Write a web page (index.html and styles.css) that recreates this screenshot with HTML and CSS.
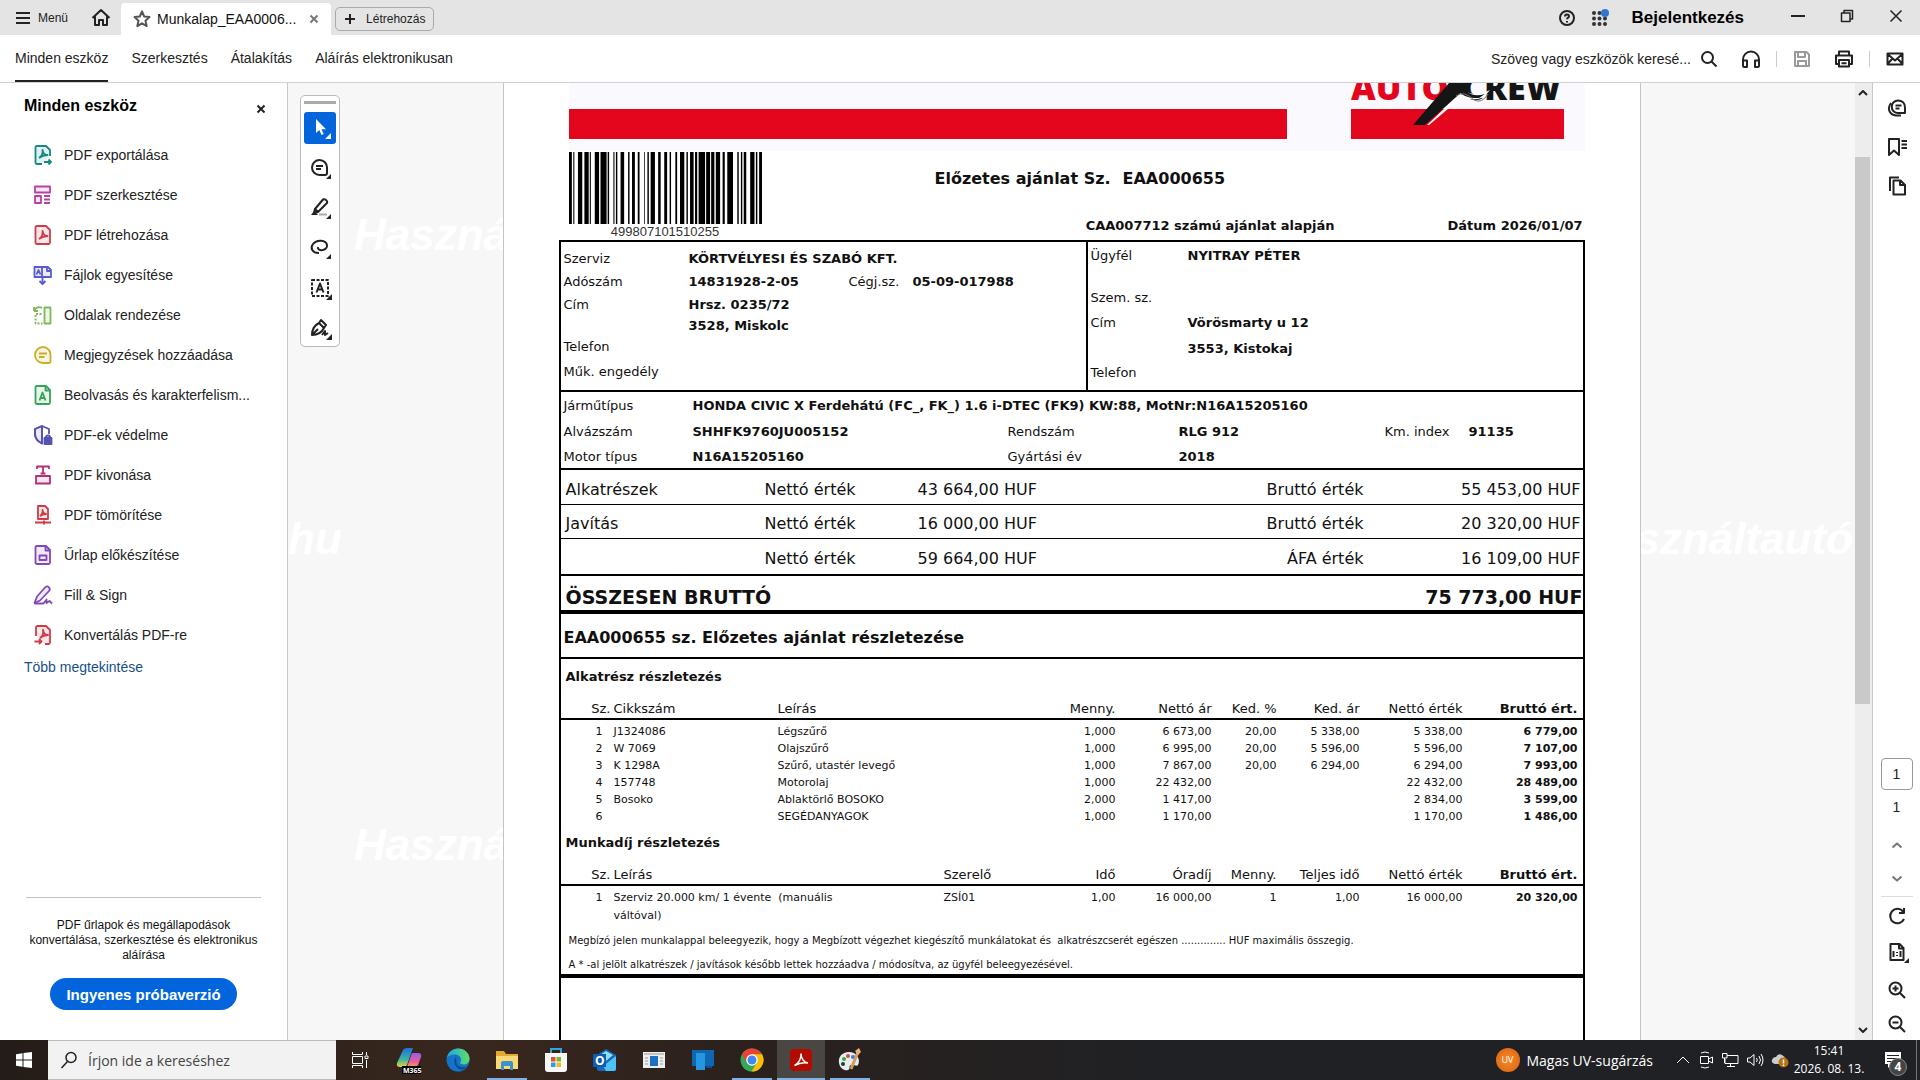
FILE: index.html
```html
<!DOCTYPE html>
<html lang="hu">
<head>
<meta charset="utf-8">
<title>Munkalap_EAA000655</title>
<link rel="stylesheet" href="styles.css">
</head>
<body>
<div class="screen">
  <header class="titlebar">
    <button class="menu-btn"><svg class="ic" width="16" height="14" viewBox="0 0 16 14"><path d="M1 2h14M1 7h14M1 12h14"/></svg>Menü</button>
    <button class="home-btn" aria-label="Kezdőlap"><svg class="ic" width="20" height="20" viewBox="0 0 20 20"><path d="M1.5 10 10 2l8.500 8M4 8.500V17h4v-5h4v5h4V8.500"/></svg></button>
    <div class="tab">
      <svg class="ic star" width="18" height="18" viewBox="0 0 18 18"><path d="m9 1.500 2.200 5 5.300.6-4 3.600 1.200 5.400L9 13.300l-4.700 2.800 1.200-5.400-4-3.600 5.300-.6z"/></svg>
      <span class="tab-name">Munkalap_EAA0006...</span>
      <button class="tab-close" aria-label="Lap bezárása"><svg class="ic grey" width="10" height="10" viewBox="0 0 10 10"><path d="m1.500 1.500 7 7m0-7-7 7"/></svg></button>
    </div>
    <button class="create-btn"><svg class="ic" width="12" height="12" viewBox="0 0 12 12"><path d="M6 1v10M1 6h10"/></svg>Létrehozás</button>
    <div class="title-right">
      <button aria-label="Súgó"><svg class="ic" width="18" height="18" viewBox="0 0 18 18"><circle cx="9" cy="9" r="7"/><path d="M7 7.500c0-2.700 4-2.700 4-.3 0 1.400-2 1.600-2 3M9 12v1.500"/></svg></button>
      <button aria-label="Alkalmazások"><svg width="18" height="18" viewBox="0 0 18 18" fill="#333"><circle cx="3" cy="4" r="2"/><circle cx="8.500" cy="4" r="2"/><circle cx="3" cy="9.500" r="2"/><circle cx="8.500" cy="9.500" r="2"/><circle cx="14" cy="9.500" r="2"/><circle cx="3" cy="15" r="2"/><circle cx="8.500" cy="15" r="2"/><circle cx="14" cy="15" r="2"/><circle cx="14" cy="4" r="4" fill="#2f77d0"/></svg></button>
      <button class="signin">Bejelentkezés</button>
      <div class="win-controls">
        <button aria-label="Kis méret"><svg class="ic" width="16" height="16" viewBox="0 0 16 16"><path d="M1 8h14"/></svg></button>
        <button aria-label="Előző méret"><svg class="ic thin" width="14" height="14" viewBox="0 0 14 14"><path d="M1.500 4h8.500v8.500H1.500zM4 4V1.500h8.500V10H10"/></svg></button>
        <button aria-label="Bezárás"><svg class="ic thin" width="14" height="14" viewBox="0 0 14 14"><path d="m1.500 1.500 11 11m0-11-11 11"/></svg></button>
      </div>
    </div>
  </header>

  <nav class="toolbar">
    <a class="current" href="#">Minden eszköz</a>
    <a href="#">Szerkesztés</a>
    <a href="#">Átalakítás</a>
    <a href="#">Aláírás elektronikusan</a>
    <div class="toolbar-right">
      <input class="find" aria-label="Keresés" placeholder="Szöveg vagy eszközök keresé...">
      <button aria-label="Keresés indítása"><svg class="ic" width="18" height="18" viewBox="0 0 18 18"><circle cx="7.500" cy="7.500" r="5.500"/><path d="m11.500 11.500 5 5"/></svg></button>
      <button class="wide" aria-label="Felolvasás"><svg class="ic" width="20" height="18" viewBox="0 0 20 18"><path d="M2 12V9.500a8 8 0 0 1 16 0V12M2 10.500h4V17H3.500A1.500 1.500 0 0 1 2 15.500zM18 10.500h-4V17h2.500a1.500 1.500 0 0 0 1.500-1.500z"/></svg></button>
      <span class="sep"></span>
      <button aria-label="Mentés"><svg class="ic pale" width="18" height="18" viewBox="0 0 18 18"><path d="M2 2h11.500L16 4.500V16H2zM5 2v5h7V2M5 16v-5h8v5"/></svg></button>
      <button class="wide" aria-label="Nyomtatás"><svg class="ic" width="20" height="18" viewBox="0 0 20 18"><path d="M5 4.500V1.500h10v3M5 14H2V5.500h16V14h-3M5 10h10v6.500H5zM7.500 13.200h5"/></svg></button>
      <span class="sep"></span>
      <button class="wide" aria-label="E-mail"><svg class="ic" width="18" height="14" viewBox="0 0 18 14"><path d="M1.500 1.500h15v11h-15zM1.500 2 9 8.500 16.500 2M1.500 12l5-5.500M16.500 12l-5-5.500"/></svg></button>
    </div>
  </nav>

  <main class="work">
    <aside class="side">
      <div class="side-head"><h2>Minden eszköz</h2><button aria-label="Panel bezárása"><svg class="ic" width="10" height="10" viewBox="0 0 10 10"><path d="m1.500 1.500 7 7m0-7-7 7"/></svg></button></div>
      <ul class="tools">
        <li><button><svg class="tic c-teal" viewBox="0 0 20 20"><path class="f" d="M4 1h9l4 4v6M9 19H4q-1.500 0-1.500-1.500v-15Q2.500 1 4 1h9l4 4v6"/><path d="M6 13c3-2 4-5 3.500-8 1 4 2 5 5 5-4 0-6 1-8.500 3M11 17h7m-2.500-2.500L18 17l-2.500 2.500"/></svg>PDF exportálása</button></li>
        <li><button><svg class="tic c-pink" viewBox="0 0 20 20"><path class="f" d="M2 1.500h15v6H2zM2 11h6v7H2z"/><path d="M11 11h6M11 14.500h6M11 18h6"/></svg>PDF szerkesztése</button></li>
        <li><button><svg class="tic c-red" viewBox="0 0 20 20"><path class="f" d="M4 1h9l4 4v12.500q0 1.500-1.500 1.500H4q-1.500 0-1.500-1.500v-15Q2.500 1 4 1z"/><path d="M6 14c3-2 4-5 3.500-8 1 4 2 5 5 5-4 0-6 1-8.500 3"/></svg>PDF létrehozása</button></li>
        <li><button><svg class="tic c-blue" viewBox="0 0 20 20"><path class="f" d="M1.500 2H9v10H1.500zM9 2h6l3 3v7H9z"/><path d="M14 2v4h4M3.500 9.500 5.500 5l2 4.500M9.500 12v7m-3-3 3 3 3-3"/></svg>Fájlok egyesítése</button></li>
        <li><button><svg class="tic c-green" viewBox="0 0 20 20"><path class="f" d="M11.500 2.500h6v16h-6z"/><path d="M1 6V2m0 4h4M1.500 5.500C3 2 6 1.500 9 3"/><path stroke-dasharray="2 1.500" d="M8.500 9h-6v9.500h7"/></svg>Oldalak rendezése</button></li>
        <li><button><svg class="tic c-yellow" viewBox="0 0 20 20"><path class="f" d="M10 2c4.500 0 7.500 3.500 7.500 8v6q0 2-2 2H10a8 8 0 0 1 0-16z"/><path d="M6 8.500h8M6 12h5.500"/></svg>Megjegyzések hozzáadása</button></li>
        <li><button><svg class="tic c-emerald" viewBox="0 0 20 20"><path class="f" d="M4 1h9l4 4v12.500q0 1.500-1.500 1.500H4q-1.500 0-1.500-1.500v-15Q2.500 1 4 1z"/><path d="M12.500 1v4.500H17M6.500 15.500l3-8 3 8M7.500 13h4"/></svg>Beolvasás és karakterfelism...</button></li>
        <li><button><svg class="tic c-indigo" viewBox="0 0 20 20"><path class="f" d="M9 18.500C4 16 2 13 2 9V4l7-3z"/><path d="M9 1v17.500C4 16 2 13 2 9V4l7-3 7 3v5"/><path class="s" d="M11.500 13h7v6h-7z"/><path d="M13 13v-1.500q2-2 4 0V13"/></svg>PDF-ek védelme</button></li>
        <li><button><svg class="tic c-magenta" viewBox="0 0 20 20"><path class="f" d="M3 11h14v7.500H3z"/><path d="M4 4V1.500h12V4M10 1.500v7M7.500 8.500h5"/></svg>PDF kivonása</button></li>
        <li><button><svg class="tic c-red" viewBox="0 0 20 20"><path class="f" d="M5 1h7l3 3v10H5z"/><path d="M7 11c2-1 3-4 2.500-6 .5 3 1.500 4 3.500 4-3 0-4 .5-6 2M2 17.500h16M11 15.500v4"/></svg>PDF tömörítése</button></li>
        <li><button><svg class="tic c-purple" viewBox="0 0 20 20"><path class="f" d="M4 1h9l4 4v12.500q0 1.500-1.500 1.500H4q-1.500 0-1.500-1.500v-15Q2.500 1 4 1z"/><path d="M12.500 1v4.500H17M6.500 10.500h7V15h-7z"/></svg>Űrlap előkészítése</button></li>
        <li><button><svg class="tic c-purple" viewBox="0 0 20 20"><path class="f" d="M1.500 18 4 11.500 12.500 2q2-1.500 3.500.5t0 3.500L7 15.500z"/><path d="M1.500 18.500h9l3-4v3.500l3-2 2.500 2.500"/></svg>Fill &amp; Sign</button></li>
        <li><button><svg class="tic c-red" viewBox="0 0 20 20"><path class="f" d="M3 11V2.500Q3 1 4.500 1H13l4 4v12.500q0 1.500-1.500 1.500H12"/><path d="M7 13c3-2 3.500-5 3-8 1 4 2 5 5 5-4 0-6 1-8 3M1.500 16.500h7M6 14l2.500 2.500L6 19"/></svg>Konvertálás PDF-re</button></li>
      </ul>
      <a class="more" href="#">Több megtekintése</a>
      <div class="promo">
        <p>PDF űrlapok és megállapodások konvertálása, szerkesztése és elektronikus aláírása</p>
        <button>Ingyenes próbaverzió</button>
      </div>
    </aside>

    <section class="viewer">
      <div class="marks" aria-hidden="true">
        <span class="mark m1">Haszná</span>
        <span class="mark m2">hu</span>
        <span class="mark m3">sználtautó</span>
        <span class="mark m4">Haszná</span>
      </div>
      <div class="quick">
        <span class="grip"></span>
        <button class="on" aria-label="Kijelölés"><svg width="24" height="24" viewBox="0 0 24 24"><path fill="#fff" d="M8 3v14l3.300-3 2.200 5 2.200-1-2.200-4.800H18zM23 17v6h-6z"/></svg></button>
        <button aria-label="Megjegyzés"><svg class="ic" width="24" height="24" viewBox="0 0 24 24"><path d="M11.500 4c4.500 0 7.500 3.500 7.500 7.500V17q0 2-2 2h-5.500a7.500 7.500 0 0 1 0-15zM8 10h7M8 13h5"/><path class="corner" d="M23 18v5h-5z"/></svg></button>
        <button aria-label="Kiemelés"><svg class="ic" width="24" height="24" viewBox="0 0 24 24"><path d="m7 13 8-9.500q2-1 3.500 1T18 8l-8 8zM7 13l-1 4 4-1"/><path class="corner" d="M3 19h7l-4-4zM23 18v5h-5z"/><path stroke="#aaa" d="M11 18.500h8"/></svg></button>
        <button aria-label="Rajzolás"><svg class="ic" width="24" height="24" viewBox="0 0 24 24"><path d="M5 8c4-5 13-4 14 1 1 6-10 7-9 2M5 8c-3 4-1 9 6 9"/><path class="corner" d="M23 18v5h-5z"/></svg></button>
        <button aria-label="Szöveg"><svg class="ic" width="24" height="24" viewBox="0 0 24 24"><path stroke-dasharray="3 1.500" d="M4 4h16v16H4z"/><path d="m8.500 16.500 3.500-9 3.500 9M10 13.500h4"/><path class="corner" d="M24 18v6h-6z"/></svg></button>
        <button aria-label="Aláírás"><svg class="ic" width="24" height="24" viewBox="0 0 24 24"><path d="M4 19c0-5 1-9 7-12l5 5c-2 4-5 7-12 7zm0 0 6-6M11 7l2-3 5 5-2 3M14 19l3-4v4l3-2"/><path class="corner" d="M24 18v6h-6z"/></svg></button>
      </div>

      <article class="page">
        <div class="band">
          <span class="band-bar"></span>
          <svg class="logo" viewBox="0 0 214 68" width="214" height="68">
            <rect y="26" width="213" height="30" fill="#e4061c"/>
            <text x="0" y="17" fill="#e4061c">AUTO</text>
            <text x="111" y="17" fill="#151515">CREW</text>
            <path d="M76 42 113 7q10 8 26 0l-6 7q-12 5-22 0L78 42z" fill="#fff"/>
            <path d="M62 42 98 0h16v6L74 42z" fill="#151515"/>
            <path d="M112 0q4 16 22 11l-6 4q-14 1-21-7z" fill="#151515"/>
            <path d="M105 13q8-6 18 4 8 4 14-6" fill="none" stroke="#777"/>
          </svg>
        </div>
        <header class="doc-head">
          <figure class="barcode">
            <svg width="193" height="72" viewBox="76 0 539 72" preserveAspectRatio="none"><path d="M76 0h8v72h-8zM88 0h3v72h-3zM101 0h12v72h-12zM119 0h12v72h-12zM134 0h3v72h-3zM148 0h12v72h-12zM164 0h17v72h-17zM184 0h4v72h-4zM200 0h3v72h-3zM207 0h4v72h-4zM220 0h10v72h-10zM241 0h4v72h-4zM252 0h8v72h-8zM268 0h5v72h-5zM286 0h2v72h-2zM295 0h4v72h-4zM304 0h12v72h-12zM325 0h7v72h-7zM342 0h8v72h-8zM357 0h4v72h-4zM373 0h5v72h-5zM386 0h12v72h-12zM404 0h4v72h-4zM414 0h10v72h-10zM428 0h6v72h-6zM438 0h18v72h-18zM459 0h11v72h-11zM473 0h9v72h-9zM486 0h12v72h-12zM505 0h6v72h-6zM518 0h16v72h-16zM546 0h4v72h-4zM556 0h4v72h-4zM564 0h7v72h-7zM582 0h12v72h-12zM598 0h4v72h-4zM607 0h8v72h-8z"/></svg>
            <figcaption>499807101510255</figcaption>
          </figure>
          <div class="doc-titles">
            <h1><span>Előzetes ajánlat Sz.</span><span>EAA000655</span></h1>
            <p><span>CAA007712 számú ajánlat alapján</span><span>Dátum 2026/01/07</span></p>
          </div>
        </header>

        <div class="form">
          <section class="parties">
            <div class="party service">
              <span>Szerviz</span><b class="span3">KÖRTVÉLYESI ÉS SZABÓ KFT.</b>
              <span>Adószám</span><b>14831928-2-05</b><span>Cégj.sz.</span><b>05-09-017988</b>
              <span>Cím</span><b class="span3">Hrsz. 0235/72</b>
              <b class="val span3">3528, Miskolc</b>
              <span class="whole">Telefon</span>
              <span class="whole">Műk. engedély</span>
            </div>
            <div class="party client">
              <span>Ügyfél</span><b>NYITRAY PÉTER</b>
              <span class="whole"></span>
              <span class="whole">Szem. sz.</span>
              <span>Cím</span><b>Vörösmarty u 12</b>
              <b class="val">3553, Kistokaj</b>
              <span class="whole">Telefon</span>
            </div>
          </section>
          <section class="vehicle">
            <span>Járműtípus</span><b class="span5">HONDA CIVIC X Ferdehátú (FC_, FK_) 1.6 i-DTEC (FK9) KW:88, MotNr:N16A15205160</b>
            <span>Alvázszám</span><b>SHHFK9760JU005152</b><span>Rendszám</span><b>RLG 912</b><span>Km. index</span><b>91135</b>
            <span>Motor típus</span><b>N16A15205160</b><span>Gyártási év</span><b>2018</b>
          </section>
          <table class="sums">
            <colgroup><col class="s1"><col class="s2"><col class="s3"><col><col class="s5"></colgroup>
            <tr><th>Alkatrészek</th><td>Nettó érték</td><td>43 664,00 HUF</td><td class="r">Bruttó érték</td><td class="r">55 453,00 HUF</td></tr>
            <tr><th>Javítás</th><td>Nettó érték</td><td>16 000,00 HUF</td><td class="r">Bruttó érték</td><td class="r">20 320,00 HUF</td></tr>
            <tr><th></th><td>Nettó érték</td><td>59 664,00 HUF</td><td class="r">ÁFA érték</td><td class="r">16 109,00 HUF</td></tr>
          </table>
          <div class="total"><span>ÖSSZESEN BRUTTÓ</span><span>75 773,00 HUF</span></div>
          <h2 class="detail-title">EAA000655 sz. Előzetes ajánlat részletezése</h2>
          <h3>Alkatrész részletezés</h3>
          <table class="items">
            <colgroup><col class="c-no"><col class="c-code"><col><col class="c-qty"><col class="c-net"><col class="c-pct"><col class="c-disc"><col class="c-val"><col class="c-gross"></colgroup>
            <thead><tr><th>Sz.</th><th class="l">Cikkszám</th><th class="l">Leírás</th><th>Menny.</th><th>Nettó ár</th><th>Ked. %</th><th>Ked. ár</th><th>Nettó érték</th><th>Bruttó ért.</th></tr></thead>
            <tbody>
            <tr><td>1</td><td class="l">J1324086</td><td class="l">Légszűrő</td><td>1,000</td><td>6 673,00</td><td>20,00</td><td>5 338,00</td><td>5 338,00</td><td>6 779,00</td></tr>
            <tr><td>2</td><td class="l">W 7069</td><td class="l">Olajszűrő</td><td>1,000</td><td>6 995,00</td><td>20,00</td><td>5 596,00</td><td>5 596,00</td><td>7 107,00</td></tr>
            <tr><td>3</td><td class="l">K 1298A</td><td class="l">Szűrő, utastér levegő</td><td>1,000</td><td>7 867,00</td><td>20,00</td><td>6 294,00</td><td>6 294,00</td><td>7 993,00</td></tr>
            <tr><td>4</td><td class="l">157748</td><td class="l">Motorolaj</td><td>1,000</td><td>22 432,00</td><td></td><td></td><td>22 432,00</td><td>28 489,00</td></tr>
            <tr><td>5</td><td class="l">Bosoko</td><td class="l">Ablaktörlő BOSOKO</td><td>2,000</td><td>1 417,00</td><td></td><td></td><td>2 834,00</td><td>3 599,00</td></tr>
            <tr><td>6</td><td class="l"></td><td class="l">SEGÉDANYAGOK</td><td>1,000</td><td>1 170,00</td><td></td><td></td><td>1 170,00</td><td>1 486,00</td></tr>
            </tbody>
          </table>
          <h3>Munkadíj részletezés</h3>
          <table class="items labour">
            <colgroup><col class="c-no"><col><col class="c-mech"><col class="c-time"><col class="c-net"><col class="c-pct"><col class="c-disc"><col class="c-val"><col class="c-gross"></colgroup>
            <thead><tr><th>Sz.</th><th class="l">Leírás</th><th class="l">Szerelő</th><th>Idő</th><th>Óradíj</th><th>Menny.</th><th>Teljes idő</th><th>Nettó érték</th><th>Bruttó ért.</th></tr></thead>
            <tbody><tr><td>1</td><td class="l">Szerviz 20.000 km/ 1 évente&nbsp; (manuális<br>váltóval)</td><td class="l">ZSÍ01</td><td>1,00</td><td>16 000,00</td><td>1</td><td>1,00</td><td>16 000,00</td><td>20 320,00</td></tr></tbody>
          </table>
          <div class="notes">
            <p>Megbízó jelen munkalappal beleegyezik, hogy a Megbízott végezhet kiegészítő munkálatokat és&nbsp; alkatrészcserét egészen .............. HUF maximális összegig.</p>
            <p>A * -al jelölt alkatrészek / javítások később lettek hozzáadva / módosítva, az ügyfél beleegyezésével.</p>
          </div>
        </div>
      </article>
    </section>

    <div class="scroll">
      <svg class="ic" width="10" height="8" viewBox="0 0 10 8"><path d="m1 6 4-4 4 4"/></svg>
      <div class="track"><div class="thumb"></div></div>
      <svg class="ic" width="10" height="8" viewBox="0 0 10 8"><path d="m1 2 4 4 4-4"/></svg>
    </div>

    <aside class="rail">
      <div class="rail-top">
        <button aria-label="Megjegyzések"><svg class="ic" width="20" height="20" viewBox="0 0 20 20"><path d="M11 2.500c4 0 7 2.500 7 7V15h-7a6.200 6.200 0 0 1 0-12.500zM8.500 7.500h6M8.500 10.500h4"/><path d="M4 5c-4 5-2 12 5 12.500h5"/></svg></button>
        <button aria-label="Könyvjelzők"><svg class="ic" width="20" height="20" viewBox="0 0 20 20"><path d="M2 2h10v16l-5-4.500L2 18zM14.500 4H20M14.500 7.500H20M14.500 11H20"/></svg></button>
        <button aria-label="Oldalak"><svg class="ic" width="20" height="20" viewBox="0 0 20 20"><path d="M6.500 4.500h7L18 9v9.500H6.500zM13 4.500V9h5M3 15V1.500h9"/></svg></button>
      </div>
      <div class="rail-bottom">
        <input class="page-no" aria-label="Oldalszám" value="1">
        <span class="page-count">1</span>
        <button class="step" aria-label="Előző oldal"><svg class="ic grey" width="12" height="8" viewBox="0 0 12 8"><path d="m1.500 6.500 4.500-4 4.500 4"/></svg></button>
        <button class="step" aria-label="Következő oldal"><svg class="ic grey" width="12" height="8" viewBox="0 0 12 8"><path d="m1.500 1.500 4.500 4 4.500-4"/></svg></button>
        <span class="line"></span>
        <button aria-label="Forgatás"><svg class="ic" width="20" height="20" viewBox="0 0 20 20"><path d="M16 5.500A7.200 7.200 0 1 0 17 13M17 2v5h-5"/></svg></button>
        <button aria-label="Igazítás"><svg class="ic" width="28" height="24" viewBox="0 0 28 24"><path d="M7.500 3h9l4 4v12h-13zM16 3v4.500h4.500M10.500 10v6M17.500 10v6M14 11v1M14 14v1"/><path class="corner" d="M26 17v5h-5z"/></svg></button>
        <button aria-label="Nagyítás"><svg class="ic" width="20" height="20" viewBox="0 0 20 20"><circle cx="8.500" cy="8.500" r="6"/><path d="m13 13 5 5M5.500 8.500h6M8.500 5.500v6"/></svg></button>
        <button class="last" aria-label="Kicsinyítés"><svg class="ic" width="20" height="20" viewBox="0 0 20 20"><circle cx="8.500" cy="8.500" r="6"/><path d="m13 13 5 5M5.500 8.500h6"/></svg></button>
      </div>
    </aside>
  </main>

  <footer class="taskbar">
    <button class="start" aria-label="Start"><svg width="16" height="16" viewBox="0 0 16 16" fill="#fff"><path d="M0 2.200 6.500 1.300v6.200H0zM7.500 1.100 16 0v7.500H7.500zM0 8.500h6.500v6.200L0 13.800zM7.500 8.500H16V16l-8.500-1.100z"/></svg></button>
    <label class="win-search"><svg class="ic thin" width="18" height="18" viewBox="0 0 18 18"><circle cx="11" cy="6.500" r="5"/><path d="m7.500 10.500-6 6.500"/></svg><input placeholder="Írjon ide a kereséshez" aria-label="Keresés a gépen"></label>
    <div class="apps">
      <button aria-label="Feladatnézet"><svg width="18" height="18" viewBox="0 0 18 18" fill="none" stroke="#fff"><path d="M1.500 1v2.500h10V1M1.500 17v-2.500h10V17M1.500 5.500h10v7h-10zM15.500 1v3M15.500 9v8M14 5h3v2.500h-3z"/></svg></button>
      <button aria-label="Microsoft 365"><svg width="26" height="28" viewBox="0 0 26 28"><defs><linearGradient id="mA" x1="0" y1="0" x2="0" y2="1"><stop offset="0" stop-color="#1f6fe0"/><stop offset=".6" stop-color="#3cb4a0"/><stop offset="1" stop-color="#e8d23a"/></linearGradient><linearGradient id="mB" x1="0" y1="0" x2="0" y2="1"><stop offset="0" stop-color="#9a5be8"/><stop offset=".6" stop-color="#e85ca0"/><stop offset="1" stop-color="#f59a60"/></linearGradient></defs><path fill="url(#mA)" d="M7 4q1-2 4-2h6l-6 17q-1 2-4 2H4q-4 0-3-4z"/><path fill="url(#mB)" d="M16 7h6q4 0 3 4l-3 8q-1 2-4 2h-7z"/><path fill="#000" d="M6 20h19v8H6z"/><text x="7" y="27" font-size="7" font-weight="700" fill="#fff">M365</text></svg></button>
      <button aria-label="Edge"><svg width="24" height="24" viewBox="0 0 24 24"><defs><linearGradient id="eg" x1="0" y1="0" x2="1" y2="0"><stop offset="0" stop-color="#1fa5e8"/><stop offset="1" stop-color="#62dd62"/></linearGradient></defs><circle cx="12" cy="12" r="11.500" fill="#1273c8"/><path fill="url(#eg)" d="M1 10C2 4 7 .500 12 .500c7 0 11.500 5 11.500 10 0 4-3 6-6 6-2 0-3.500-1-3.500-2 1-1 1-2 1-3 0-3-3-5-6.500-5S2 8 1 10z"/><path fill="#0d4a94" d="M10 9c-3 3-2 9 3 12 3 1 7 0 8.500-3-3 2-10 2-11-3-.5-2 0-4-.5-6z"/></svg></button>
      <button class="open" aria-label="Fájlkezelő"><svg width="24" height="22" viewBox="0 0 24 22"><path fill="#e6a92e" d="M1 2h8l2 3h12v14H1z"/><path fill="#fbd873" d="M1 7h22v13H1z"/><path fill="#3a93cf" d="M6 21v-7q0-2 2-2h8q2 0 2 2v7h-3v-4H9v4z"/></svg></button>
      <button aria-label="Store"><svg width="24" height="26" viewBox="0 0 24 26"><path fill="none" stroke="#36a3dc" stroke-width="2" d="M7 8V2h10v6"/><path fill="#f7f7f7" d="M1 6h22v16q0 3-3 3H4q-3 0-3-3z"/><path fill="#e8502f" d="M7 10h4.500v4.500H7z"/><path fill="#7ab82d" d="M12.500 10H17v4.500h-4.500z"/><path fill="#2b9fe0" d="M7 15.500h4.500V20H7z"/><path fill="#f6b820" d="M12.500 15.500H17V20h-4.500z"/></svg></button>
      <button aria-label="Outlook"><svg width="26" height="24" viewBox="0 0 26 24"><path fill="#1766b8" d="m5 7 9-6 10 6v14q0 2-2 2H7q-2 0-2-2z"/><path fill="#4cc2f5" d="m24 8-13 10 3 5h8q2 0 2-2z"/><path fill="#8be0fb" d="m8 7 6-4 7 4-7 6z"/><path fill="#0d5cb0" d="M1 6h13v13H1z"/><text x="3" y="17" font-size="12" font-weight="700" fill="#fff">O</text></svg></button>
      <button aria-label="Hírek"><svg width="22" height="18" viewBox="0 0 22 18"><path fill="#eee" d="M0 1h22v16H0z"/><path fill="#1c72c2" d="M7 5h8v10H7z"/><path stroke="#999" d="M1 3h20M2 7h3M2 10h3M2 13h3M17 7h3M17 10h3M17 13h3"/></svg></button>
      <button aria-label="Telefonkapcsolat"><svg width="24" height="22" viewBox="0 0 24 22"><path fill="#0f67b3" d="M1 1h22v16H1z"/><path fill="#2497e0" d="M5 4h9v17H5z"/><path fill="#0b4e92" d="M15 17h6v2h-6z"/></svg></button>
      <button class="open" aria-label="Chrome"><svg width="24" height="24" viewBox="0 0 24 24"><circle cx="12" cy="12" r="11.500" fill="#34a853"/><path fill="#ea4335" d="M2 6.200A11.500 11.500 0 0 1 22 6.300H12L7 15z"/><path fill="#fbbc05" d="M22 6.300A11.500 11.500 0 0 1 11.500 23.500L17 14.500 12 6.300z"/><circle cx="12" cy="12" r="5.800" fill="#fff"/><circle cx="12" cy="12" r="4.500" fill="#4285f4"/></svg></button>
      <button class="open active" aria-label="Acrobat"><svg width="24" height="24" viewBox="0 0 24 24"><rect x="1" y="1" width="22" height="22" rx="4" fill="#b30b00"/><path fill="none" stroke="#fff" stroke-width="1.500" d="M5.500 17.500c4-2 7-7 6.500-12 0 5 3 9 7 9.500-5-1-9 0-13.500 2.500z"/></svg></button>
      <button class="open" aria-label="Paint"><svg width="26" height="26" viewBox="0 0 26 26"><path fill="#e4edf0" d="M12 5C5 5 1 10 2 16s6 8 9 7 0-4 3-5 5 2 7 0c3-5-1-13-9-13z"/><circle cx="7" cy="12" r="2" fill="#3da33d"/><circle cx="11" cy="9" r="2" fill="#e8442e"/><circle cx="6" cy="17" r="2" fill="#333"/><circle cx="16" cy="10" r="2" fill="#2e7ee8"/><path stroke="#d99a55" stroke-width="3" d="m14 22 7-17"/><path fill="#e8b07a" d="m18 4 4-3 2 4-3 3z"/></svg></button>
    </div>
    <div class="tray">
      <button class="weather"><span class="uv">UV</span>Magas UV-sugárzás</button>
      <div class="tray-icons">
        <svg class="tr" width="16" height="16" viewBox="0 0 16 16"><path d="m2 11 6-6 6 6"/></svg>
        <svg class="tr" width="16" height="18" viewBox="0 0 16 18"><path d="M2.500 5.500h8v7h-8zM10.500 8l4-2v6l-4-2M3 2q4-2 8 0M3 16q4 2 8 0"/></svg>
        <svg class="tr" width="18" height="16" viewBox="0 0 18 16"><path d="M6 3.500h11v8H4V7M9.500 11.500v3M6 14.500h8M1.500 1.500H6V6H1.500zM3.500 6v5"/></svg>
        <svg class="tr" width="18" height="16" viewBox="0 0 18 16"><path d="M1.500 6H4l4-3.500v11L4 10H1.500zM10.500 6q1.500 2 0 4M13 4q3 4 0 8M15 2q4 6 0 12"/></svg>
        <svg width="18" height="16" viewBox="0 0 18 16"><path fill="#ccc" d="M4 12q-4-1-3-4t4-3q2-4 6-2t3 5l2 4z"/><circle cx="12.500" cy="10.500" r="5" fill="#b9700f"/><path stroke="#fff" stroke-width="1.500" d="M12.500 7.500v4M12.500 12.500V14"/></svg>
      </div>
      <div class="clock"><span>15:41</span><span>2026. 08. 13.</span></div>
      <button class="notice" aria-label="Értesítések"><svg width="18" height="18" viewBox="0 0 18 18"><path fill="#fff" d="M1 1h16v12H8l-4 4v-4H1z"/><path stroke="#222" d="M3 4.500h12M3 7.500h12M3 10.500h7"/></svg><span class="badge">4</span></button>
    </div>
  </footer>
</div>
</body>
</html>
```
FILE: styles.css
```css
* { box-sizing: border-box; }
body { margin: 0; font-family: "Liberation Sans", Arial, sans-serif; font-size: 14px; color: #222; }
button { font: inherit; color: inherit; background: none; border: 0; padding: 0; display: flex; align-items: center; justify-content: center; }
input { font: inherit; color: inherit; border: 0; background: none; padding: 0; min-width: 0; }
input::placeholder { color: inherit; opacity: 1; }
a { color: inherit; text-decoration: none; }
h1, h2, h3, p, ul, figure { margin: 0; padding: 0; font-weight: inherit; font-size: inherit; }
ul { list-style: none; }
svg { flex: none; display: block; }

.ic { fill: none; stroke: #222; stroke-width: 2; stroke-linejoin: round; }
.ic.thin { stroke-width: 1.5; }
.ic.grey { stroke: #777; }
.ic.star { stroke: #555; }
.ic.pale { stroke: #999; }
.corner { fill: #222; stroke: none; }

.screen { height: 100vh; display: flex; flex-direction: column; overflow: hidden; background: #fff; }

/* window title bar */
.titlebar { height: 35px; flex: none; display: flex; align-items: center; background: #e4e4e4; font-size: 12px; }
.menu-btn { gap: 7px; margin-left: 15px; }
.home-btn { margin: 0 10px 0 23px; }
.tab { align-self: flex-end; height: 32px; width: 210px; display: flex; align-items: center; padding: 0 12px; background: #fff; border-radius: 4px 4px 0 0; font-size: 14px; color: #111; }
.tab-name { flex: 1; padding-left: 6px; white-space: nowrap; }
.create-btn { height: 24px; margin: 3px 0 0 4px; padding: 0 8px; gap: 10px; border: 1px solid #aaa; border-radius: 5px; }
.title-right { margin-left: auto; display: flex; align-items: center; gap: 15px; }
.signin { font-size: 17px; font-weight: 700; color: #000; padding-left: 8px; }
.win-controls { display: flex; padding: 0 0 3px 14px; }
.win-controls button { width: 49px; }

/* tool tabs */
.toolbar { height: 48px; flex: none; display: flex; align-items: stretch; gap: 23px; padding-left: 15px; border-bottom: 1px solid #d0d0d0; }
.toolbar a { display: flex; align-items: center; border-bottom: 2px solid transparent; }
.toolbar a.current { border-color: #222; }
.toolbar-right { margin-left: auto; display: flex; align-items: center; padding-right: 9px; }
.toolbar-right button { width: 34px; }
.toolbar-right button.wide { width: 50px; }
.toolbar-right button.wide:last-child { width: 32px; margin-left: 9px; }
.find { width: 201px; height: 24px; }
.sep { width: 1px; height: 16px; background: #ccc; margin-right: 8px; }
.sep:nth-last-child(2) { margin: 0; }

.work { flex: 1; min-height: 0; display: flex; }

/* left panel */
.side { width: 288px; flex: none; display: flex; flex-direction: column; border-right: 1px solid #c8c8c8; }
.side-head { height: 52px; display: flex; align-items: center; justify-content: space-between; padding: 0 21px 6px 24px; }
.side-head h2 { font-size: 16px; font-weight: 700; color: #000; }
.side-head button { padding-top: 6px; }
.tools button { height: 40px; padding-left: 33px; gap: 11px; }
.tic { width: 20px; height: 20px; fill: none; stroke: currentColor; stroke-width: 1.800; stroke-linejoin: round; }
.tic .f { fill: currentColor; fill-opacity: .12; }
.tic .s { fill: currentColor; }
.tic.c-teal { color: #138a83; } .tic.c-pink { color: #b8419c; } .tic.c-red { color: #cf3b46; }
.tic.c-blue { color: #5b5bd0; } .tic.c-green { color: #7fb75a; } .tic.c-yellow { color: #c9ae28; }
.tic.c-emerald { color: #36a356; } .tic.c-indigo { color: #5653b2; } .tic.c-magenta { color: #b52f74; }
.tic.c-purple { color: #8048b8; }
.more { margin: 4px 24px; color: #184f86; }
.promo { margin: auto 26px 30px; padding-top: 20px; border-top: 1px solid #c4c4c4; display: flex; flex-direction: column; align-items: center; gap: 15px; }
.promo p { font-size: 12px; line-height: 15px; text-align: center; color: #111; }
.promo button { height: 32px; padding: 0 16px; border-radius: 16px; background: #0265dc; color: #fff; font-weight: 700; font-size: 15px; white-space: nowrap; }

/* document area */
.viewer { flex: 1; min-width: 0; position: relative; overflow: hidden; background: #f7f7f7; }
.marks { position: absolute; inset: 0; overflow: hidden; color: #fff; font: italic 700 44px/60px "Liberation Sans", Arial, sans-serif; }
.mark { position: absolute; }
.m1 { left: 66px; top: 122px; }
.m2 { left: 0; top: 426px; }
.m3 { right: 2px; top: 426px; }
.m4 { left: 66px; top: 732px; }
.quick { position: absolute; left: 12px; top: 12px; width: 40px; height: 252px; padding: 5px 3px 0; display: flex; flex-direction: column; gap: 8px; background: #fff; border: 1px solid #bbb; border-radius: 5px; }
.quick button { height: 32px; border-radius: 3px; }
.quick .on { background: #0265dc; }
.grip { height: 3px; background: #aaa; }

.page { position: relative; width: min(1138px, 100%); min-height: 100%; margin: 0 auto; padding: 0 55px; display: flex; flex-direction: column; background: #fff; border: solid #c4c4c4; border-width: 0 1px; color: #111; font-family: "DejaVu Sans", Verdana, sans-serif; font-size: 13px; }
.band { height: 68px; margin: 0 0 0 10px; padding-right: 20px; display: flex; justify-content: space-between; background: #f9f9fe; }
.band-bar { width: 718px; height: 30px; margin-top: 26px; background: #e4061c; }
.logo { font: 800 34px "Open Sans", sans-serif; }
.doc-head { height: 89px; display: flex; padding: 1px 0 0 10px; }
.barcode { width: 193px; text-align: center; }
.barcode figcaption { font: 13px/15px "Liberation Sans", sans-serif; color: #333; }
.doc-titles { flex: 1; display: flex; flex-direction: column; justify-content: space-between; padding: 17px 2px 5px 173px; font-weight: 700; }
.doc-titles h1 { font-size: 16px; line-height: 20px; display: flex; gap: 12px; }
.doc-titles p { display: flex; justify-content: flex-end; gap: 113px; white-space: nowrap; line-height: 18px; }

.form { flex: 1; border: 2px solid #000; border-bottom: 0; }
.parties { display: flex; height: 150px; border-bottom: 2px solid #000; }
.party { display: grid; align-items: center; align-content: start; padding: 4px 0 0 3px; white-space: nowrap; }
.service { flex: 1; grid-template: 24px 23px 22px 21px 20px 30px / 125px 160px 64px 1fr; }
.client { width: 497px; border-left: 2px solid #000; grid-template: 18px 24px 18px 33px 18px 30px / 97px 1fr; }
.span3 { grid-column: 2 / span 3; }
.span5 { grid-column: 2 / span 5; }
.val { grid-column-start: 2; }
.whole { grid-column: 1 / -1; }
.vehicle { display: grid; grid-template: 26px 26px 24px / 129px 315px 171px 206px 84px 1fr; align-items: center; padding-left: 3px; border-bottom: 2px solid #000; white-space: nowrap; }

table { width: 100%; border-collapse: collapse; table-layout: fixed; }
th, td { padding: 0; font-weight: 400; white-space: nowrap; }
.sums { font-size: 16px; text-align: left; }
.sums tr { height: 34px; border-bottom: 1px solid #000; }
.sums tr:last-child { height: 37px; border-bottom: 2px solid #000; }
.sums th { padding: 5px 0 0 5px; }
.sums td { padding-top: 5px; }
.sums .r { text-align: right; padding-right: 2px; }
.s1 { width: 204px; } .s2 { width: 153px; } .s3 { width: 131px; } .s5 { width: 217px; }
.total { height: 38px; display: flex; justify-content: space-between; align-items: center; padding: 7px 0 0 5px; border-bottom: 4px solid #000; font-size: 19px; font-weight: 700; }
.detail-title { height: 45px; display: flex; align-items: center; padding: 4px 0 0 3px; border-bottom: 2px solid #000; font-size: 16px; font-weight: 700; }
.form h3 { padding: 9px 0 0 5px; line-height: 18px; font-weight: 700; }
.items { margin-top: 12px; text-align: right; font-size: 11px; }
.items thead tr { height: 21px; line-height: 17px; font-size: 13px; border-bottom: 2px solid #000; }
.items td { height: 17px; line-height: 17px; vertical-align: top; }
.items tbody tr:first-child td { height: 20px; padding-top: 3px; }
.items .l { text-align: left; padding-left: 7px; }
.items td:first-child { padding-right: 8px; }
.items .l:nth-child(2) { padding-left: 3px; }
.items th:last-child, .items td:last-child { font-weight: 700; padding-right: 5px; }
.items.labour tbody td { line-height: 18px; padding-top: 4px; }
.c-no { width: 50px; } .c-code { width: 160px; } .c-qty { width: 90px; } .c-net { width: 96px; }
.c-pct { width: 65px; } .c-disc { width: 83px; } .c-val { width: 103px; } .c-gross { width: 120px; }
.c-mech { width: 89px; } .c-time { width: 90px; }
.notes { height: 53px; padding: 7px 0 0 8px; border-bottom: 4px solid #000; font-size: 10px; }
.notes p { height: 24px; line-height: 17px; white-space: nowrap; }

/* scroll bar */
.scroll { width: 18px; flex: none; display: flex; flex-direction: column; align-items: center; padding: 6px 2px 6px 0; background: #ededed; border-right: 1px solid #c8c8c8; }
.track { flex: 1; width: 100%; padding-top: 60px; }
.thumb { height: 63%; background: #c9c9c9; }

/* right rail */
.rail { width: 47px; flex: none; display: flex; flex-direction: column; justify-content: space-between; align-items: center; }
.rail-top { padding-top: 5px; }
.rail button { height: 37px; }
.rail-top button { height: 39px; }
.rail-bottom { display: flex; flex-direction: column; align-items: center; }
.rail .last { height: 32px; }
.page-no { width: 32px; height: 32px; border: 1px solid #999; border-radius: 4px; text-align: center; }
.page-count { height: 38px; line-height: 34px; }
.rail .step { height: 34px; }
.line { width: 32px; height: 1px; background: #ddd; }

/* Windows taskbar */
.taskbar { height: 40px; flex: none; display: flex; background: linear-gradient(90deg, #241c18, #38271e 25%, #2b211d 38%, #202124 60%); color: #fff; font-family: "Open Sans", "Noto Sans", sans-serif; }
.start { width: 48px; }
.win-search { width: 288px; display: flex; align-items: center; gap: 10px; padding-left: 12px; background: #f2f2f2; border: solid #bbb; border-width: 1px 0; color: #444; }
.win-search input { flex: 1; font-size: 14px; }
.apps { display: flex; gap: 1px; }
.apps button { width: 48px; position: relative; }
.apps .active { background: #4a4644; }
.apps .open::after { content: ""; position: absolute; left: 4px; right: 4px; bottom: 0; height: 2px; background: #7fb2e5; }
.apps .active::after { left: 0; right: 0; }
.tray { margin-left: auto; display: flex; align-items: center; padding-right: 3px; }
.weather { gap: 7px; font-size: 14px; }
.uv { width: 24px; height: 24px; border-radius: 50%; background: radial-gradient(#f78a2b, #d9610b); font-size: 9px; line-height: 24px; }
.tray-icons { display: flex; align-items: center; gap: 7px; padding-left: 22px; }
.tr { fill: none; stroke: #fff; }
.clock { width: 80px; display: flex; flex-direction: column; align-items: center; font-size: 12px; line-height: 18px; white-space: nowrap; }
.notice { width: 48px; height: 40px; position: relative; border-right: 1px solid #777; }
.badge { position: absolute; right: 9px; bottom: 4px; width: 18px; height: 18px; border-radius: 50%; background: #444; border: 1px solid #888; font-size: 12px; font-weight: 700; line-height: 16px; }
```
